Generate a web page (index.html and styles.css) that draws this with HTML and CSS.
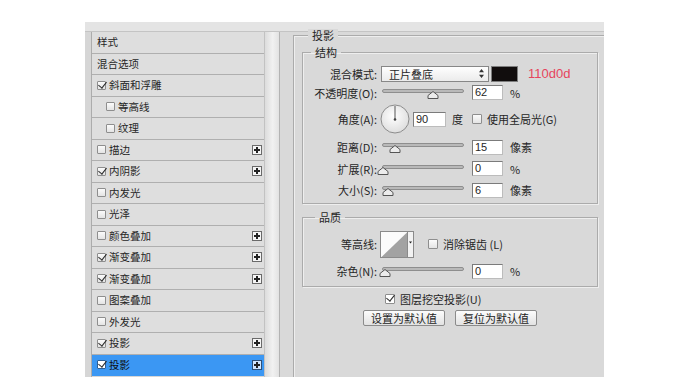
FILE: index.html
```html
<!DOCTYPE html>
<html lang="zh-CN">
<head>
<meta charset="utf-8">
<title>图层样式 - 投影</title>
<link rel="stylesheet" href="styles.css">
</head>
<body>
<div class="dialog">
  <div class="topbar"></div>
  <div class="content">
    <div class="side">
      <ul class="list">
        <li class="item">样式</li>
        <li class="item">混合选项</li>
        <li class="item"><span class="cb on"></span>斜面和浮雕</li>
        <li class="item sub"><span class="cb"></span>等高线</li>
        <li class="item sub"><span class="cb"></span>纹理</li>
        <li class="item"><span class="cb"></span>描边<span class="plus"></span></li>
        <li class="item"><span class="cb on"></span>内阴影<span class="plus"></span></li>
        <li class="item"><span class="cb"></span>内发光</li>
        <li class="item"><span class="cb"></span>光泽</li>
        <li class="item"><span class="cb"></span>颜色叠加<span class="plus"></span></li>
        <li class="item"><span class="cb on"></span>渐变叠加<span class="plus"></span></li>
        <li class="item"><span class="cb on"></span>渐变叠加<span class="plus"></span></li>
        <li class="item"><span class="cb"></span>图案叠加</li>
        <li class="item"><span class="cb"></span>外发光</li>
        <li class="item"><span class="cb on"></span>投影<span class="plus"></span></li>
        <li class="item sel"><span class="cb on"></span>投影<span class="plus"></span></li>
      </ul>
      <div class="strip"></div>
    </div>
    <div class="main">
      <fieldset class="group outer">
        <legend>投影</legend>
        <fieldset class="group inner struct">
          <legend>结构</legend>
          <div class="row h19">
            <span class="lbl">混合模式:</span>
            <div class="select">正片叠底<svg class="arrows" width="5" height="9" viewBox="0 0 5 9"><path d="M2.5 0 L5 3.2 H0 Z M2.5 9 L0 5.8 H5 Z" fill="#333"/></svg></div>
            <span class="swatch"></span>
            <span class="hex">110d0d</span>
          </div>
          <div class="row h19">
            <span class="lbl">不透明度(O):</span>
            <svg class="slider" width="90" height="14" viewBox="0 0 90 14"><rect x="5.5" y="3.5" width="81" height="3" rx="1.5" fill="#b9b9b9" stroke="#8e8e8e"/><path d="M56 5.5 L61 9.5 L61 12.5 L51 12.5 L51 9.5 Z" fill="#ececec" stroke="#555"/></svg>
            <span class="inp">62</span><span class="unit">%</span>
          </div>
          <div class="row h34">
            <span class="lbl">角度(A):</span>
            <svg class="dial" width="30" height="30" viewBox="0 0 30 30"><defs><radialGradient id="dg" cx="0.45" cy="0.4" r="0.6"><stop offset="0" stop-color="#ffffff"/><stop offset="1" stop-color="#dedede"/></radialGradient></defs><circle cx="15" cy="15" r="14" fill="url(#dg)" stroke="#8c8c8c"/><line x1="15" y1="15" x2="15" y2="2" stroke="#555" stroke-width="1"/><circle cx="15" cy="15.5" r="1.3" fill="#444"/></svg>
            <span class="inp wide">90</span><span class="unit deg">度</span>
            <span class="cb gl"></span><span class="cbtext">使用全局光(G)</span>
          </div>
          <div class="row h22">
            <span class="lbl">距离(D):</span>
            <svg class="slider" width="90" height="14" viewBox="0 0 90 14"><rect x="5.5" y="3.5" width="81" height="3" rx="1.5" fill="#b9b9b9" stroke="#8e8e8e"/><path d="M18 5.5 L23 9.5 L23 12.5 L13 12.5 L13 9.5 Z" fill="#ececec" stroke="#555"/></svg>
            <span class="inp">15</span><span class="unit">像素</span>
          </div>
          <div class="row h21">
            <span class="lbl">扩展(R):</span>
            <svg class="slider" width="90" height="14" viewBox="0 0 90 14"><rect x="5.5" y="3.5" width="81" height="3" rx="1.5" fill="#b9b9b9" stroke="#8e8e8e"/><path d="M6 5.5 L11 9.5 L11 12.5 L1 12.5 L1 9.5 Z" fill="#ececec" stroke="#555"/></svg>
            <span class="inp">0</span><span class="unit">%</span>
          </div>
          <div class="row h22">
            <span class="lbl">大小(S):</span>
            <svg class="slider" width="90" height="14" viewBox="0 0 90 14"><rect x="5.5" y="3.5" width="81" height="3" rx="1.5" fill="#b9b9b9" stroke="#8e8e8e"/><path d="M11 5.5 L16 9.5 L16 12.5 L6 12.5 L6 9.5 Z" fill="#ececec" stroke="#555"/></svg>
            <span class="inp">6</span><span class="unit">像素</span>
          </div>
        </fieldset>
        <fieldset class="group inner quality">
          <legend>品质</legend>
          <div class="row h32">
            <span class="lbl">等高线:</span>
            <svg class="contour" width="34" height="27" viewBox="0 0 34 27"><rect x="0.5" y="0.5" width="27" height="26" fill="#fbfbfb" stroke="#8a8a8a"/><path d="M1.5 26 L27 1.5 L27 26 Z" fill="#a2a2a2"/><rect x="27.5" y="0.5" width="6" height="26" fill="#f2f2f2" stroke="#8a8a8a"/><path d="M29 10.5 H32 L30.5 12.5 Z" fill="#222"/></svg>
            <span class="cb aa"></span><span class="cbtext">消除锯齿 (L)</span>
          </div>
          <div class="row h22">
            <span class="lbl">杂色(N):</span>
            <svg class="slider" width="90" height="14" viewBox="0 0 90 14"><rect x="5.5" y="3.5" width="81" height="3" rx="1.5" fill="#b9b9b9" stroke="#8e8e8e"/><path d="M8 5.5 L13 9.5 L13 12.5 L3 12.5 L3 9.5 Z" fill="#ececec" stroke="#555"/></svg>
            <span class="inp">0</span><span class="unit">%</span>
          </div>
        </fieldset>
        <div class="knock"><span class="cb on big"></span>图层挖空投影(U)</div>
        <div class="btns">
          <button class="btn" type="button">设置为默认值</button>
          <button class="btn" type="button">复位为默认值</button>
        </div>
      </fieldset>
    </div>
  </div>
</div>
</body>
</html>
```

FILE: styles.css
```css
* { box-sizing: border-box; }

body {
  margin: 0;
  background: #ffffff;
  font-family: "Noto Sans CJK SC", "Noto Sans", sans-serif;
  font-size: 11px;
  line-height: 12px;
  color: #262626;
}

.dialog {
  margin: 22px 0 0 85px;
  width: 519px;
  height: 355px;
  background: #d8d8d8;
  display: flex;
  flex-direction: column;
  overflow: hidden;
}

.topbar {
  flex: none;
  height: 10px;
  background: #e4e4e4;
  border-bottom: 1px solid #c4c4c4;
}

.content {
  flex: 1;
  display: flex;
  min-height: 0;
}

/* ---------- left style list ---------- */
.side {
  flex: none;
  width: 195px;
  padding-left: 6px;
  display: flex;
  border-right: 1px solid #b3b3b3;
  background: #d6d6d6;
}

.list {
  width: 174px;
  margin: 0;
  padding: 0 0 1px 0;
  list-style: none;
  display: grid;
  grid-template-rows: repeat(16, 1fr);
  border-left: 1px solid #acacac;
  border-right: 1px solid #c2c2c2;
  font-size: 10.5px;
}

.item {
  display: flex;
  align-items: center;
  padding: 0 2px 0 5px;
  background: #dedede;
  border-bottom: 1px solid #afafaf;
  white-space: nowrap;
}

.item.sub .cb { margin-left: 9px; }

.item.sel {
  background: #3b97f3;
  border-bottom-color: #3b97f3;
  color: #101010;
}

.strip {
  width: 14px;
  background: linear-gradient(to right, #dcdcdc, #f1f1f1 55%, #e2e2e2);
}

.cb {
  flex: none;
  position: relative;
  width: 9px;
  height: 9px;
  margin-right: 3px;
  border: 1px solid #8e8e8e;
  border-radius: 1px;
  background: linear-gradient(#fbfbfb, #e4e4e4);
}

.cb.on::after {
  content: "";
  position: absolute;
  left: 2px;
  top: -2px;
  width: 4px;
  height: 7px;
  border: solid #2a2a2a;
  border-width: 0 1.5px 1.5px 0;
  transform: rotate(38deg);
}

.item.sel .cb { background: #ffffff; border-color: #2d5f96; }

.plus {
  flex: none;
  position: relative;
  margin-left: auto;
  width: 10px;
  height: 10px;
  border: 1px solid #6a6a6a;
  background: #f5f5f5;
}

.plus::before,
.plus::after {
  content: "";
  position: absolute;
  background: #222;
}

.plus::before { left: 1px; top: 3px; width: 6px; height: 2px; }
.plus::after { left: 3px; top: 1px; width: 2px; height: 6px; }

.item.sel .plus { background: #cfe5ff; border-color: #2c4f78; }

/* ---------- right settings ---------- */
.main {
  flex: 1;
  min-width: 0;
  padding-left: 13px;
  background: #d9d9d9;
}

.group {
  margin: 0;
  min-width: 0;
  border: 1px solid #ababab;
  box-shadow: inset 1px 1px 0 #eeeeee, 1px 1px 0 #eeeeee;
}

.group > legend {
  padding: 0 4px;
  line-height: 12px;
  font-size: 11px;
}

.outer {
  width: 340px;
  min-height: 420px;
  margin-top: -3px;
  padding: 5px 0 0 8px;
}

.outer > legend {
  margin-left: 6px;
  background: #d9d9d9;
}

.inner { width: 296px; }

.struct { padding: 6px 0 2px 0; }
.struct > legend { margin-left: 8px; }

.quality { margin-top: 7px; padding: 5px 0 4px 0; }
.quality > legend { margin-left: 12px; }

.row {
  display: flex;
  align-items: center;
  white-space: nowrap;
}

.h19 { height: 19px; }
.h21 { height: 21px; }
.h22 { height: 22px; }
.h32 { height: 32px; }
.h34 { height: 34px; }

.lbl {
  flex: none;
  width: 74px;
  text-align: right;
}

.select {
  flex: none;
  display: flex;
  align-items: center;
  margin-left: 4px;
  width: 108px;
  height: 16px;
  padding-left: 7px;
  border: 1px solid #878787;
  background: linear-gradient(#fefefe, #ebebeb);
}

.arrows { margin-left: auto; margin-right: 4px; }

.swatch {
  flex: none;
  margin-left: 2px;
  width: 27px;
  height: 16px;
  background: #110d0d;
  border: 1px solid #7e7e7e;
}

.hex {
  margin-left: 10px;
  color: #e6455d;
  font-family: "Liberation Sans", Arial, sans-serif;
  font-size: 13px;
  line-height: 14px;
}

.slider { flex: none; display: block; }

.inp {
  flex: none;
  margin-left: 5px;
  width: 31px;
  height: 15px;
  padding-left: 2px;
  background: #ffffff;
  border: 1px solid;
  border-color: #7b7b7b #bcbcbc #bcbcbc #7b7b7b;
  font-family: "Liberation Sans", Arial, sans-serif;
  font-size: 11px;
  line-height: 13px;
}

.inp.wide { width: 33px; margin-left: 3px; }

.unit { margin-left: 7px; }
.unit.deg { margin-left: 6px; }

.dial { flex: none; display: block; margin-left: 3px; }

.cb.gl { margin-left: 9px; margin-right: 5px; width: 10px; height: 10px; }
.cb.aa { margin-left: 14px; margin-right: 5px; width: 10px; height: 10px; }

.contour { flex: none; display: block; margin-left: 3px; }

.knock {
  display: flex;
  align-items: center;
  height: 15px;
  margin-top: 4px;
  margin-left: 83px;
  white-space: nowrap;
}

.cb.big {
  width: 10px;
  height: 10px;
  margin-right: 5px;
  background: #ffffff;
}

.btns {
  width: 296px;
  display: flex;
  justify-content: center;
  gap: 10px;
  margin-top: 4px;
}

.btn {
  width: 82px;
  height: 16px;
  padding: 0;
  border: 1px solid #8b8b8b;
  border-radius: 2px;
  background: linear-gradient(#fcfcfc, #e2e2e2);
  font-family: inherit;
  font-size: 11px;
  line-height: 14px;
  color: #1d1d1d;
}
```
